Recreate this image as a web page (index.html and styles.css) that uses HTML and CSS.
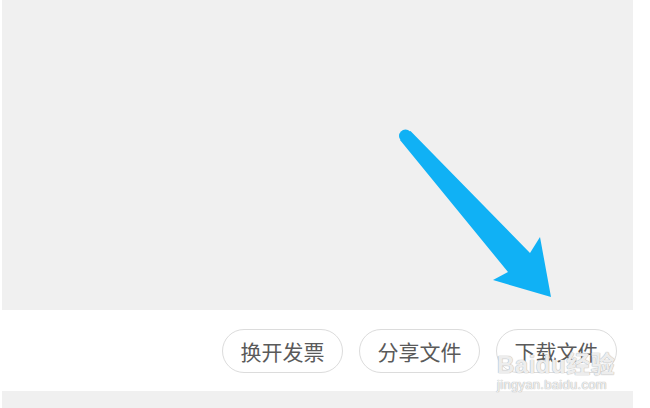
FILE: index.html
```html
<!DOCTYPE html>
<html lang="zh-CN">
<head>
    <meta charset="utf-8" />
    <meta name="viewport" content="width=device-width, initial-scale=1.0" />
    <title>文件</title>
    <link rel="stylesheet" href="styles.css">
</head>
<body>
    <div class="page">
        <div class="preview">
            <svg class="arrow" width="631" height="310" viewBox="2 0 631 310">
                <circle cx="405.5" cy="136" r="6.5" fill="#10b1f5" />
                <polygon fill="#10b1f5" points="410.5,131 530,253 540,237 551,297 493,280 508,272 400,140" />
            </svg>
        </div>

        <div class="actions">
            <button type="button" class="pill">换开发票</button>
            <button type="button" class="pill">分享文件</button>
            <button type="button" class="pill">下载文件</button>
            <div class="watermark">
                <span class="wm-logo">Baidu经验</span>
                <span class="wm-url">jingyan.baidu.com</span>
            </div>
        </div>

        <div class="next"></div>
    </div>
</body>
</html>
```

FILE: styles.css
```css
body {
    margin: 0;
    background-color: #ffffff;
    font-family: "Noto Sans CJK SC", "Noto Sans", sans-serif;
    overflow: hidden;
}

.page {
    width: 631px;
    margin-left: 2px;
}

.preview {
    height: 310px;
    background-color: #f0f0f0;
}

.arrow {
    display: block;
}

.actions {
    position: relative;
    height: 81px;
    display: flex;
    justify-content: flex-end;
    align-items: center;
    gap: 16px;
    padding-right: 16px;
    box-sizing: border-box;
}

.pill {
    height: 44px;
    width: 121px;
    padding: 0;
    margin-top: 1px;
    border: 1px solid #dcdcdc;
    border-radius: 22px;
    background-color: #ffffff;
    color: #5a5a5a;
    font-family: "Noto Sans CJK SC", sans-serif;
    font-size: 21px;
    line-height: 1;
}

.watermark {
    position: absolute;
    left: 495px;
    top: 42px;
    display: flex;
    flex-direction: column;
    align-items: flex-start;
    color: rgba(255, 255, 255, 0.8);
    text-shadow: 0 0 1px #b0b0b0, 0 0 1px #b0b0b0;
    pointer-events: none;
}

.wm-logo {
    font-family: "Liberation Sans", "Noto Sans CJK SC", sans-serif;
    font-size: 24px;
    font-weight: bold;
    line-height: 26px;
    letter-spacing: 0.5px;
}

.wm-url {
    font-family: "Liberation Sans", sans-serif;
    font-size: 13px;
    line-height: 14px;
    letter-spacing: 0.3px;
}

.next {
    height: 17px;
    background-color: #f0f0f0;
}
```
